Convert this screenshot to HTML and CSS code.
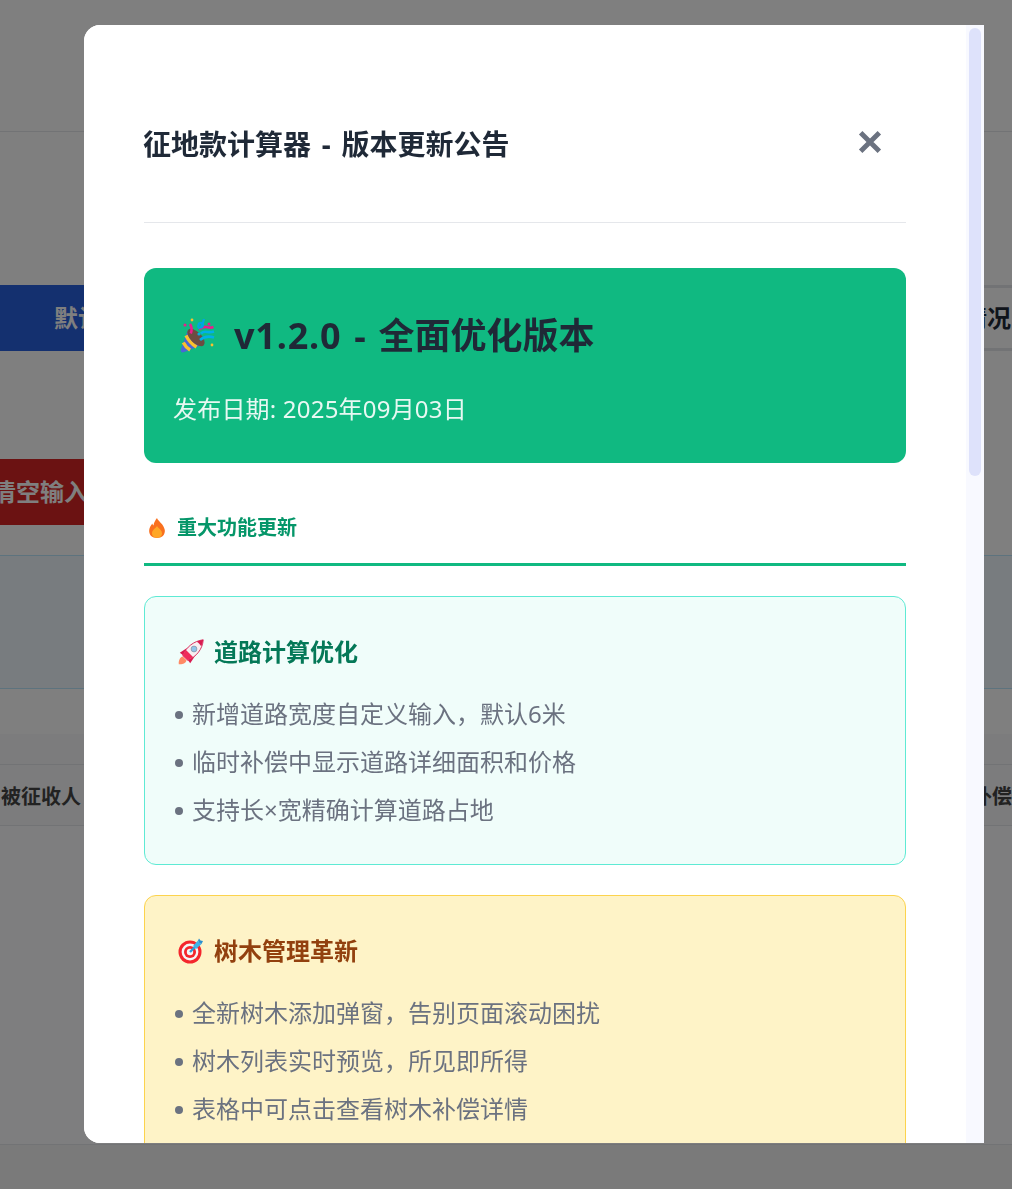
FILE: index.html
```html
<!DOCTYPE html>
<html lang="zh-CN">
<head>
    <meta charset="UTF-8">
    <meta name="viewport" content="width=device-width, initial-scale=1.0">
    <title>征地款计算器</title>
    <link rel="stylesheet" href="styles.css">
</head>
<body>
    <!-- page behind the dialog -->
    <div class="page">
        <div class="page-header"></div>
        <div class="button-row first-row">
            <button class="btn btn-blue">默认配置</button>
            <button class="btn btn-outline">查看情况</button>
        </div>
        <div class="button-row second-row">
            <button class="btn btn-red">清空输入</button>
        </div>
        <div class="divider-line"></div>
        <div class="info-panel"></div>
        <div class="table-top"></div>
        <div class="table-head">
            <span class="col-name">被征收人</span>
            <span class="col-comp">补偿</span>
        </div>
        <div class="table-body"></div>
        <div class="page-footer"></div>
    </div>

    <div class="overlay"></div>

    <div class="modal">
        <div class="modal-scroll">
            <div class="modal-header">
                <h2 class="modal-title">征地款计算器 - 版本更新公告</h2>
                <button class="close-button" aria-label="关闭">
                    <svg class="close-icon" viewBox="0 0 24 24"><path d="M4 4 20 20M20 4 4 20"/></svg>
                </button>
            </div>

            <div class="version-banner">
                <h1 class="version-title">
                    <svg class="emoji emoji-lg" viewBox="0 0 36 36">
                        <path d="M9 12 2 31c-.8 3 .6 4 3.500 3L25 26z" fill="#4a67d6"/>
                        <path d="M7 17.500c2.500 5 5.500 8.500 10.500 11.500M4.300 24.500c1.500 3 3.500 5.500 6.800 7.500" fill="none" stroke="#fbc02d" stroke-width="3.400"/>
                        <ellipse cx="17" cy="19.500" rx="5.500" ry="11" transform="rotate(-45 17 19.500)" fill="#6d4c41"/>
                        <path d="M21 22c4-3.500 8-4.500 14-2.500M22 15.500c2-2 4.500-2 6.500-1.500 2 .3 4 .3 6.500-.5" fill="none" stroke="#00b0e8" stroke-width="2.600"/>
                        <path d="M11 6c1.800 3 2.200 6 .8 9.500M20 11.500c3-2.500 6-3 8.500-2.200 2 .5 4 .5 6-.3" fill="none" stroke="#ec1c8e" stroke-width="2.600"/>
                        <path d="M25 1c-.5 3-1.500 6-3.500 9M20 5.500c2-1 3.500-.500 4 .8s-.5 3-2.500 3.500-3-1-1.500-4.300z" fill="none" stroke="#00a6e0" stroke-width="2.200"/>
                        <circle cx="13" cy="2" r="1.400" fill="#fbc02d"/><circle cx="6" cy="7" r="1.500" fill="#ec1c8e"/>
                        <circle cx="30" cy="6" r="1.500" fill="#ec1c8e"/><circle cx="33" cy="27" r="1.400" fill="#fbc02d"/>
                        <circle cx="20" cy="16" r="1.600" fill="#00b0e8"/>
                    </svg>
                    <span><span class="version-number">v1.2.0</span> - 全面优化版本</span>
                </h1>
                <p class="version-date">发布日期: 2025年09月03日</p>
            </div>

            <h3 class="section-title">
                <svg class="emoji emoji-sm" viewBox="0 0 20 20">
                    <path d="M10 0c.8 3 6.800 6 7.800 12 .5 5-3 8-7.800 8s-8.300-3-7.800-8c.3-3 2-5 3.200-6.500.2 1 .5 1.500 1.100 2C6.800 4.500 8.500 2 10 0z" fill="#f9701e"/>
                    <path d="M10 8c1.500 2.500 5 4 5 7.300 0 3-2.300 4.500-5 4.500s-5-1.500-5-4.500C5 12 8.500 10.500 10 8z" fill="#ffa726"/>
                </svg>
                <span>重大功能更新</span>
            </h3>

            <div class="update-card card-teal">
                <h4 class="card-title">
                    <svg class="emoji emoji-md" viewBox="0 0 26 26">
                        <path d="M.8 25.200c-.5-3 1-7.200 4-7.700l3.700 3.700C8 24 4.300 25.700.8 25.200z" fill="#ff8a65"/>
                        <path d="M9 9 1.800 13.800 5.500 16.500z" fill="#d81b50"/>
                        <path d="M17 17 12.200 24.200 9.500 20.500z" fill="#d81b50"/>
                        <path d="M4.800 16.500C8 8 16 2 25.200.8c-.5 9.200-7 17.200-15.500 20.400z" fill="#f8eef1" stroke="#d81b50" stroke-width=".9"/>
                        <path d="M4.800 16.500C5.600 14.400 6.700 12.600 8 11L15 18c-1.600 1.300-3.400 2.400-5.300 3.200z" fill="#ef2b5b"/>
                        <path d="M18.600 2.800c1.900 1 3.600 2.700 4.600 4.600.9-2 1.700-4.200 2-6.600-2.400.3-4.600 1-6.600 2z" fill="#d81b50"/>
                        <circle cx="16" cy="10" r="2.900" fill="#90c4ea" stroke="#8a93a8" stroke-width=".8"/>
                    </svg>
                    <span>道路计算优化</span>
                </h4>
                <ul class="card-list">
                    <li>新增道路宽度自定义输入，默认6米</li>
                    <li>临时补偿中显示道路详细面积和价格</li>
                    <li>支持长×宽精确计算道路占地</li>
                </ul>
            </div>

            <div class="update-card card-yellow">
                <h4 class="card-title">
                    <svg class="emoji emoji-md" viewBox="0 0 26 26">
                        <circle cx="12" cy="14" r="11.500" fill="#f4262c"/>
                        <circle cx="12" cy="14" r="8.400" fill="#f5f5f5"/>
                        <circle cx="12" cy="14" r="6" fill="#f4262c"/>
                        <circle cx="12" cy="14" r="3.200" fill="#f5f5f5"/>
                        <path d="M12 14 20 6" stroke="#2f9ad8" stroke-width="2.400"/>
                        <path d="M15 8 20 2.500l1.200 2.300 2.300 1.200-5.500 5z" fill="#40b4e8"/>
                        <path d="M20 2.500 21 .5l1.500 2L25 3l-1.500 3-2.300-1.200z" fill="#2a8fd0"/>
                    </svg>
                    <span>树木管理革新</span>
                </h4>
                <ul class="card-list">
                    <li>全新树木添加弹窗，告别页面滚动困扰</li>
                    <li>树木列表实时预览，所见即所得</li>
                    <li>表格中可点击查看树木补偿详情</li>
                </ul>
            </div>
        </div>
    </div>
</body>
</html>
```

FILE: styles.css
```css
* {
    box-sizing: border-box;
}
html, body {
    margin: 0;
    height: 100%;
    overflow: hidden;
}
body {
    font-family: "Noto Sans", "Noto Sans CJK SC", sans-serif;
    background-color: #fff;
    color: #1f2937;
}

/* page behind the dialog */
.page {
    height: 1189px;
    display: flex;
    flex-direction: column;
    overflow: hidden;
}
.page-header {
    height: 132px;
    flex: none;
    border-bottom: 1px solid #e5e7eb;
}
.button-row {
    display: flex;
    flex: none;
    height: 66px;
}
.first-row {
    margin-top: 153px;
    justify-content: space-between;
}
.second-row {
    margin-top: 108px;
}
.btn {
    height: 66px;
    width: 300px;
    flex: none;
    font-family: inherit;
    font-size: 24px;
    font-weight: 700;
    border: 0;
    color: #fff;
    padding-bottom: 4px;
}
.btn-blue {
    background-color: #2860de;
    text-align: left;
    padding-left: 54px;
}
.btn-outline {
    margin-right: -160px;
    background: #fff;
    color: #1f2937;
    border: 3px solid #e5e7eb;
    text-align: left;
    padding-left: 0;
    text-indent: 40px;
}
.btn-red {
    margin-left: -8px;
    width: 200px;
    background-color: #d62424;
    text-align: left;
    padding-left: 0;
    white-space: nowrap;
}
.divider-line {
    height: 30px;
    flex: none;
}
.info-panel {
    height: 134px;
    flex: none;
    background-color: #f0f9ff;
    border-top: 1px solid #bae6fd;
    border-bottom: 1px solid #bae6fd;
}
.table-top {
    margin-top: 45px;
    height: 31px;
    flex: none;
    background-color: #f8f9fa;
    border-bottom: 1px solid #e5e7eb;
}
.table-head {
    height: 61px;
    flex: none;
    display: flex;
    justify-content: space-between;
    align-items: center;
    background-color: #f8f9fa;
    border-bottom: 1px solid #e5e7eb;
    font-size: 20px;
    font-weight: 700;
    color: #444;
    white-space: nowrap;
}
.col-name {
    margin-left: 1px;
}
.table-body {
    height: 319px;
    flex: none;
    background-color: #fdfdff;
    border-bottom: 1px solid #e5e7eb;
}
.page-footer {
    flex: 1;
    background-color: #f5f5f5;
}

.overlay {
    position: fixed;
    inset: 0;
    background-color: rgba(0, 0, 0, 0.5);
}

/* dialog */
.modal {
    position: fixed;
    left: 84px;
    top: 25px;
    width: 900px;
    height: 1118px;
    background-color: #fff;
    border-radius: 16px 0 0 16px;
    overflow: hidden;
}
.modal-scroll {
    height: 100%;
    overflow-y: hidden;
    padding: 60px 78px 0 60px;
    background: linear-gradient(90deg, #fff 882px, #f8f9ff 882px);
    position: relative;
}
.modal-scroll::after {
    content: "";
    position: absolute;
    left: 885px;
    top: 3px;
    width: 12px;
    height: 448px;
    border-radius: 6px;
    background-color: #dee2fb;
}
.modal-header {
    display: flex;
    justify-content: space-between;
    align-items: center;
    height: 138px;
    padding-bottom: 20px;
    border-bottom: 1px solid #e5e7eb;
}
.modal-title {
    margin: 0 0 0 -1px;
    font-size: 28px;
    font-weight: 700;
    line-height: 40px;
    word-spacing: 3.5px;
    color: #1f2937;
}
.close-button {
    width: 36px;
    height: 36px;
    margin: 0 18px 4px 0;
    padding: 0;
    border: 0;
    background: none;
    display: flex;
    align-items: center;
    justify-content: center;
}
.close-icon {
    flex: none;
    width: 28px;
    height: 28px;
    fill: none;
    stroke: #6b7280;
    stroke-width: 4.2;
}

.version-banner {
    margin-top: 45px;
    height: 195px;
    padding: 40px 29px 0;
    background-color: #10b981;
    border-radius: 12px;
}
.version-title {
    margin: 0;
    display: flex;
    align-items: center;
    gap: 19px;
    padding-left: 6px;
    font-size: 36px;
    line-height: 56px;
    font-weight: 700;
    word-spacing: 3.5px;
    color: #1f2937;
}
.version-number {
    letter-spacing: 0.8px;
}
.version-date {
    margin: 28px 0 0;
    font-size: 24px;
    line-height: 34px;
    letter-spacing: 0.2px;
    color: #fff;
    opacity: 0.9;
}

.section-title {
    margin: 44px 0 0;
    height: 59px;
    display: flex;
    align-items: flex-start;
    gap: 10px;
    padding: 7px 0 0 3px;
    font-size: 20px;
    line-height: 28px;
    font-weight: 700;
    color: #059669;
    border-bottom: 3px solid #10b981;
}

.update-card {
    margin-top: 30px;
    padding: 25px 30px 30px;
    border: 1px solid;
    border-radius: 12px;
}
.card-teal {
    background-color: #f0fdfa;
    border-color: #5eead4;
}
.card-teal .card-title {
    color: #047857;
}
.card-yellow {
    background-color: #fef3c7;
    border-color: #fcd34d;
}
.card-yellow .card-title {
    color: #92400e;
}
.card-title {
    margin: 0;
    display: flex;
    align-items: center;
    gap: 10px;
    padding-left: 3px;
    font-size: 24px;
    line-height: 60px;
    font-weight: 700;
}
.card-list {
    margin: 8px 0 0;
    padding: 0;
    list-style: none;
}
.card-list li {
    height: 48px;
    font-size: 24px;
    line-height: 48px;
    color: #6b7280;
    white-space: nowrap;
}
.card-list li::before {
    content: "";
    display: inline-block;
    width: 8px;
    height: 8px;
    margin-right: 9px;
    vertical-align: 4px;
    border-radius: 50%;
    background-color: #6b7280;
}

.emoji {
    flex: none;
    display: block;
}
.emoji-lg {
    width: 36px;
    height: 36px;
}
.emoji-md {
    width: 26px;
    height: 26px;
}
.emoji-sm {
    width: 20px;
    height: 20px;
    margin-top: 4px;
}
```
